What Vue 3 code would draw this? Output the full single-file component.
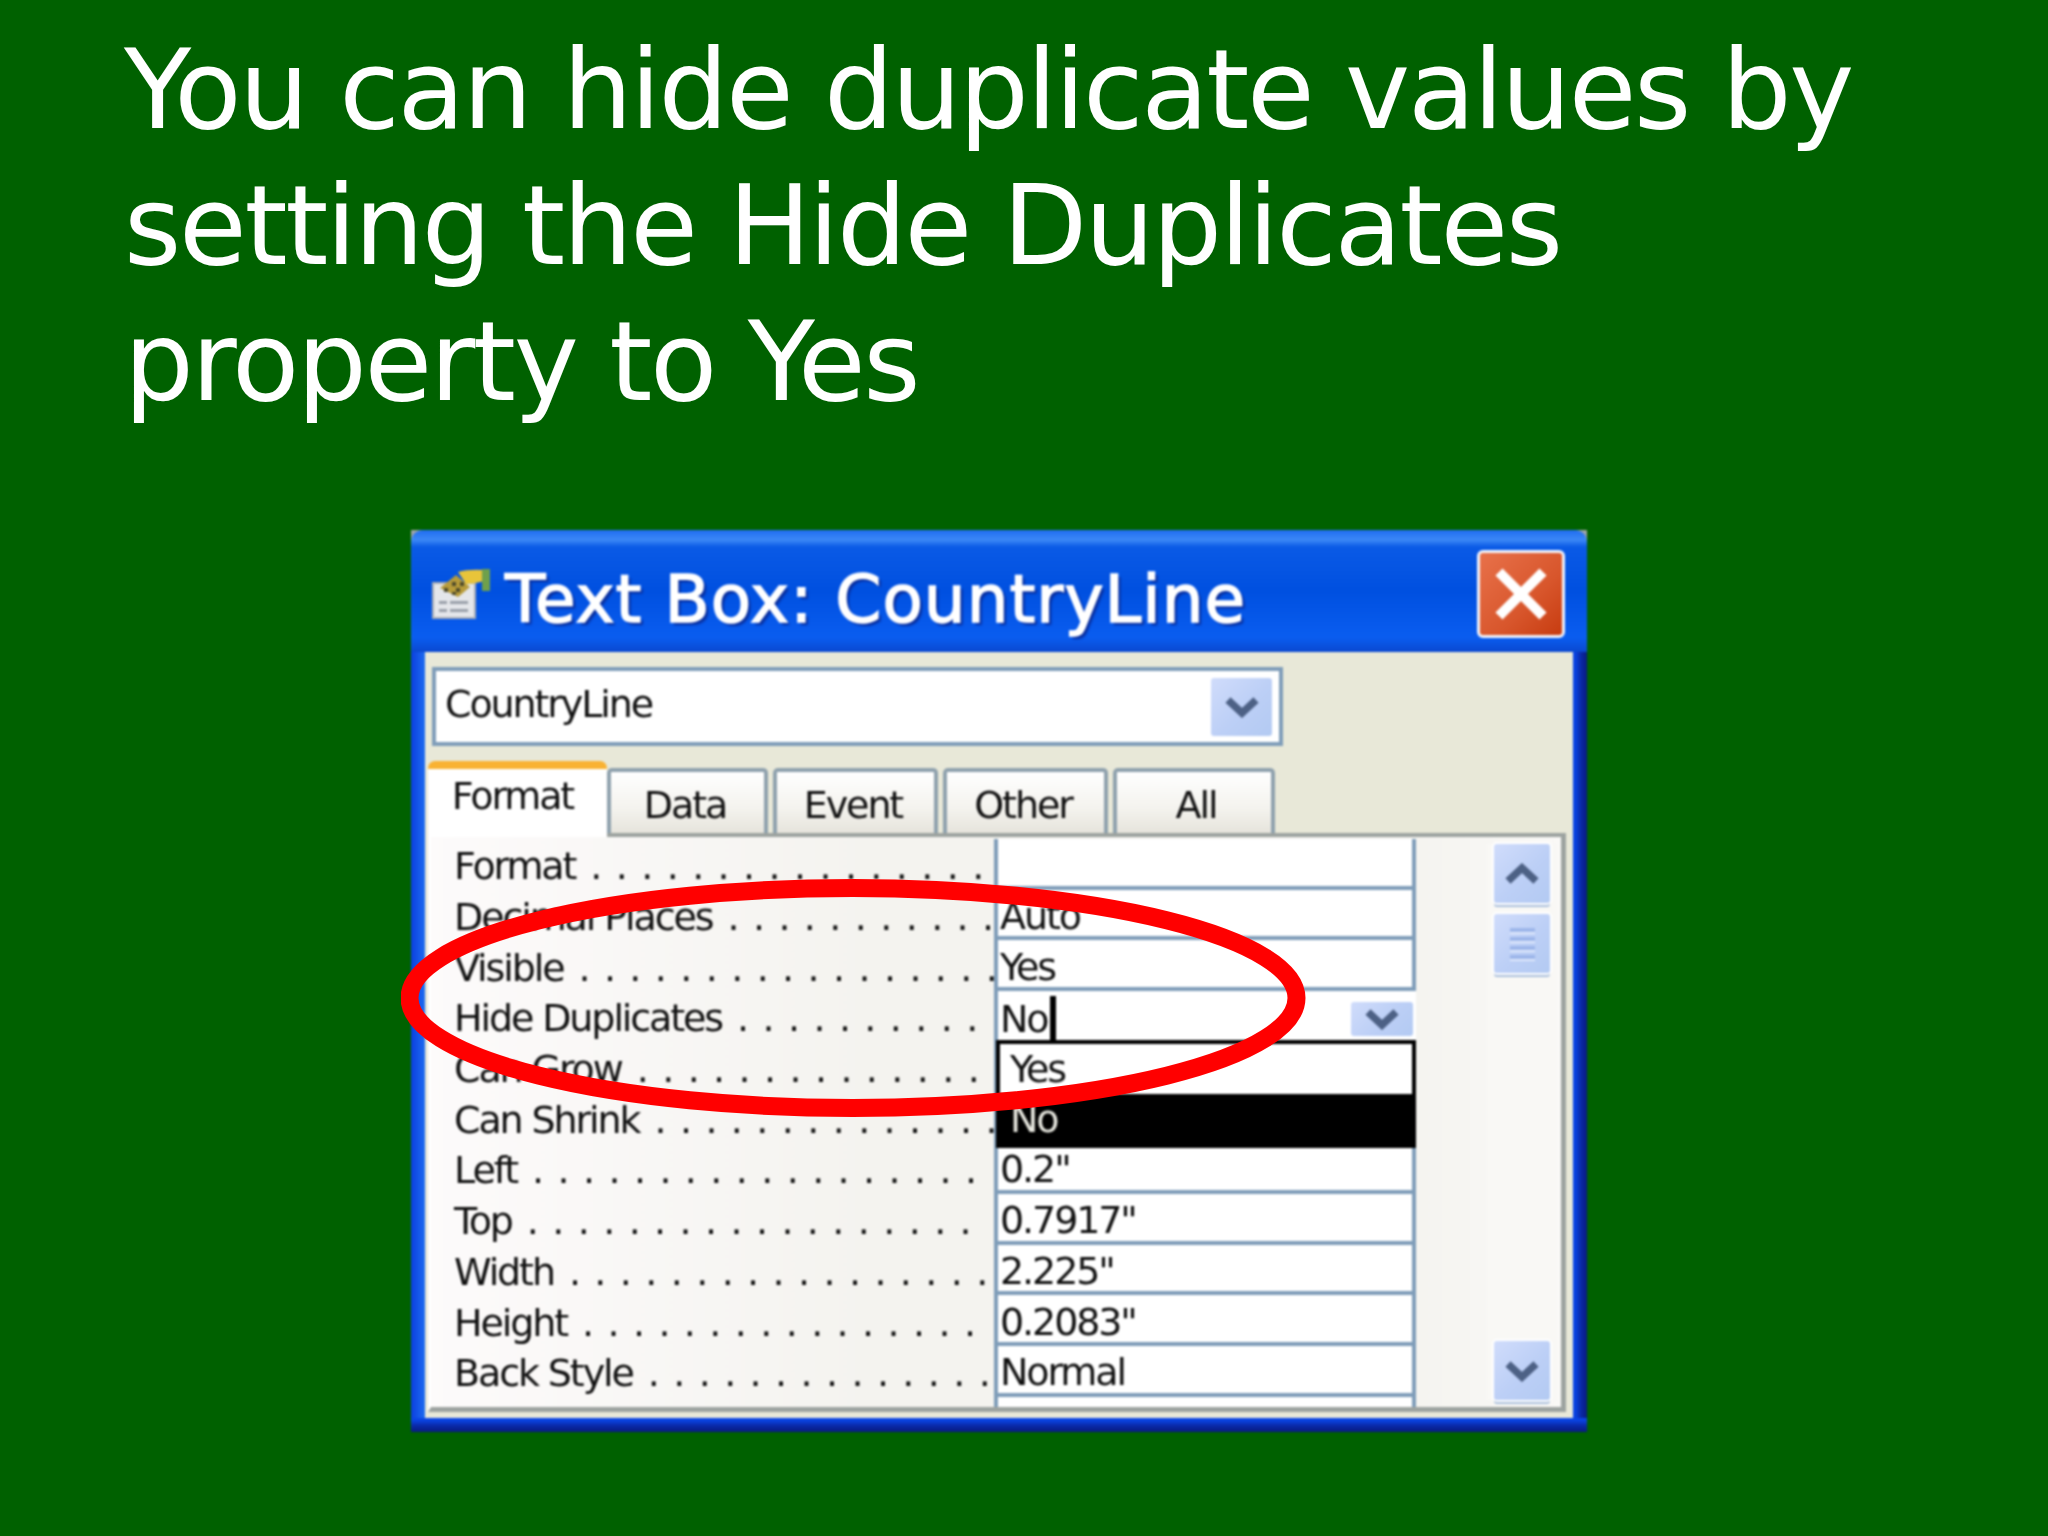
<template>
  <div class="slide">
    <h1 class="heading">
      You can hide duplicate values by<br />
      setting the Hide Duplicates<br />
      property to Yes
    </h1>

    <div class="dialog-wrap">
      <div class="dialog">
        <div class="titlebar">
          <svg class="title-icon" width="58" height="50" viewBox="0 0 58 50">
            <rect x="1" y="14" width="42" height="35" fill="#e4e6ea" stroke="#a9adb5" stroke-width="2" />
            <rect x="7" y="32" width="8" height="3" fill="#9aa0aa" />
            <rect x="18" y="32" width="18" height="3" fill="#9aa0aa" />
            <rect x="7" y="40" width="8" height="3" fill="#9aa0aa" />
            <rect x="18" y="40" width="18" height="3" fill="#9aa0aa" />
            <path d="M8 19 L24 6 L38 18 L26 28 Z" fill="#b79b3a" />
            <path d="M12 19 h4 v4 h-4z M20 13 h4 v4 h-4z M24 19 h4 v4 h-4z M28 13 h4 v4 h-4z M20 23 h4 v3 h-4z" fill="#4e4a2a" />
            <path d="M26 3 Q36 0 52 1 L52 12 Q42 15 34 15 Z" fill="#e8c43a" />
            <rect x="50" y="0" width="8" height="22" fill="#6fa04c" />
          </svg>
          <span class="title-text">Text Box: CountryLine</span>
          <div class="close-btn">
            <svg width="54" height="54" viewBox="0 0 54 54">
              <path d="M5 5 L49 49 M49 5 L5 49" stroke="#fff" stroke-width="10" />
            </svg>
          </div>
        </div>

        <div class="frame">
          <div class="dialog-body">
            <div class="combo">
              <span class="combo-text">CountryLine</span>
              <div class="arrow-btn combo-btn">
                <svg class="chevron" viewBox="0 0 34 22"><path d="M3 4 L17 17 L31 4" /></svg>
              </div>
            </div>

            <div class="tabs">
              <div
                v-for="tab in tabs"
                :key="tab.name"
                class="tab"
                :class="{ active: tab.active }"
                :style="{ width: tab.width + 'px' }"
              >
                {{ tab.name }}
              </div>
            </div>

            <div class="panel">
              <div class="rows">
                <div v-for="row in rows" :key="row.label" class="row">
                  <div class="prop-name">
                    <span class="prop-label">{{ row.label }}</span>
                    <span class="prop-dots">{{ leader(row.dots) }}</span>
                  </div>
                  <div class="prop-value" :class="{ editing: row.editing }">
                    <span>{{ row.value }}</span>
                    <template v-if="row.editing">
                      <i class="caret"></i>
                      <div class="arrow-btn value-btn">
                        <svg class="chevron" viewBox="0 0 34 22"><path d="M3 4 L17 17 L31 4" /></svg>
                      </div>
                      <div class="dropdown">
                        <div class="option">Yes</div>
                        <div class="option selected">No</div>
                      </div>
                    </template>
                  </div>
                </div>
              </div>

              <div class="scrollbar">
                <div class="arrow-btn scroll-btn">
                  <svg class="chevron up" viewBox="0 0 34 22"><path d="M3 4 L17 17 L31 4" /></svg>
                </div>
                <div class="arrow-btn scroll-btn thumb">
                  <i></i><i></i><i></i><i></i>
                </div>
                <div class="arrow-btn scroll-btn last">
                  <svg class="chevron" viewBox="0 0 34 22"><path d="M3 4 L17 17 L31 4" /></svg>
                </div>
              </div>
            </div>
          </div>
        </div>
      </div>

      <svg class="circle" width="920" height="254" viewBox="0 0 920 254">
        <ellipse cx="452" cy="119" rx="443.5" ry="110" fill="none" stroke="#ff0000" stroke-width="18" />
      </svg>
    </div>
  </div>
</template>

<script setup>
const tabs = [
  { name: 'Format', width: 179, active: true },
  { name: 'Data', width: 161 },
  { name: 'Event', width: 165 },
  { name: 'Other', width: 165 },
  { name: 'All', width: 162 }
]

const rows = [
  { label: 'Format', dots: 16, value: '' },
  { label: 'Decimal Places', dots: 11, value: 'Auto' },
  { label: 'Visible', dots: 17, value: 'Yes' },
  { label: 'Hide Duplicates', dots: 10, value: 'No', editing: true },
  { label: 'Can Grow', dots: 14, value: '' },
  { label: 'Can Shrink', dots: 14, value: '' },
  { label: 'Left', dots: 18, value: '0.2"' },
  { label: 'Top', dots: 18, value: '0.7917"' },
  { label: 'Width', dots: 17, value: '2.225"' },
  { label: 'Height', dots: 16, value: '0.2083"' },
  { label: 'Back Style', dots: 14, value: 'Normal' },
  { label: '', dots: 0, value: '' }
]

const leader = (count) => Array(count).fill('.').join(' ')
</script>

<style>
body {
  background: #006100;
}
</style>

<style scoped>
.slide {
  width: 2048px;
  height: 1536px;
  overflow: hidden;
  background: #006100;
  font-family: 'DejaVu Sans', Verdana, sans-serif;
}

.heading {
  margin: 22px 0 0 124px;
  font-size: 110px;
  font-weight: 400;
  line-height: 136px;
  letter-spacing: -2.3px;
  color: #fff;
  filter: blur(0.5px);
}

.dialog-wrap {
  position: relative;
  width: 1176px;
  margin: 100px 0 0 411px;
}

.dialog {
  height: 902px;
  display: flex;
  flex-direction: column;
  background: #9ea4a8;
  filter: blur(0.8px);
}

.titlebar {
  height: 122px;
  flex-shrink: 0;
  display: flex;
  align-items: center;
  padding: 0 22px 0 21px;
  border-radius: 12px 12px 0 0;
  background: linear-gradient(#1f6cf0 0, #3c88f6 8%, #0a5ae6 14%, #0050e0 50%, #0a5df0 88%, #0a48d0 100%);
}

.title-icon {
  flex-shrink: 0;
  margin: 6px 15px 0 0;
}

.title-text {
  flex: 1;
  margin-top: 17px;
  font-size: 66px;
  letter-spacing: 1px;
  color: #fff;
  -webkit-text-stroke: 1.5px #fff;
  text-shadow: 3px 3px 2px #0a2f9e;
}

.close-btn {
  width: 88px;
  height: 88px;
  margin-top: 6px;
  box-sizing: border-box;
  display: flex;
  align-items: center;
  justify-content: center;
  border: 3px solid #f1f3fb;
  border-radius: 6px;
  background: linear-gradient(135deg, #e8714a, #d8562c 60%, #c73c10);
}

.frame {
  flex: 1;
  min-height: 0;
  display: flex;
  padding: 0 14px 14px 14px;
  background:
    linear-gradient(#0a44e4 15%, #0a2aa8 55%, #081a80) bottom / 100% 14px no-repeat,
    linear-gradient(90deg, #0a44e4 15%, #0a2aa8 55%, #081a80) right / 14px 100% no-repeat,
    linear-gradient(90deg, #0a3ee0, #1e6cf0) left / 14px 100% no-repeat;
}

.dialog-body {
  flex: 1;
  min-width: 0;
  padding: 15px 7px 6px 3px;
  background: #e8e8d8;
}

.combo {
  width: 851px;
  height: 79px;
  margin-left: 4px;
  display: flex;
  align-items: center;
  justify-content: space-between;
  padding: 0 7px 0 9px;
  box-sizing: border-box;
  background: #fff;
  border: 4px solid #7f9db9;
}

.combo-text {
  margin-bottom: 6px;
  font-size: 38px;
  letter-spacing: -2.1px;
  color: #111;
}

.arrow-btn {
  display: flex;
  align-items: center;
  justify-content: center;
  flex-shrink: 0;
  box-sizing: border-box;
  border-radius: 3px;
  background: linear-gradient(135deg, #d0dcfb, #bccff6 55%, #b3caf2);
}

.combo-btn {
  width: 61px;
  height: 58px;
}

.chevron {
  width: 34px;
  height: 22px;
  fill: none;
  stroke: #4d6185;
  stroke-width: 7.5;
}

.chevron.up {
  transform: scaleY(-1);
}

.tabs {
  display: flex;
  align-items: flex-end;
  gap: 5px;
  height: 72px;
  margin-top: 15px;
  position: relative;
  z-index: 1;
}

.tab {
  height: 65px;
  box-sizing: border-box;
  display: flex;
  align-items: center;
  justify-content: center;
  padding: 4px 5px 0 0;
  font-size: 38px;
  letter-spacing: -2.1px;
  color: #111;
  background: linear-gradient(#fff, #f4f3ee 60%, #e6e4dc);
  border: 4px solid #8fa1ad;
  border-bottom: 0;
  border-radius: 5px 5px 0 0;
}

.tab:last-child {
  padding: 4px 0 0 4px;
}

.tab.active {
  height: 76px;
  margin: 0 -5px -4px 0;
  padding: 0 10px 14px 0;
  background: #fff;
  border: 0;
  border-top: 8px solid #f9b233;
  border-radius: 7px 7px 0 0;
}

.panel {
  height: 579px;
  box-sizing: border-box;
  display: flex;
  padding: 2px 0 0 0;
  overflow: hidden;
  background: linear-gradient(90deg, #fdfbfb, #f4f3ef 40%, #f4f3ef 85%, #faf9f7);
  border-left: 3px solid #fff;
  border-top: 4px solid #9da3a0;
  border-right: 5px solid #9da3a0;
  border-bottom: 5px solid #9da3a0;
}

.rows {
  width: 985px;
  flex-shrink: 0;
}

.row {
  height: 50.7px;
  display: flex;
  font-size: 38px;
  letter-spacing: -2.1px;
  color: #111;
}

.prop-name {
  width: 563px;
  box-sizing: border-box;
  display: flex;
  align-items: center;
  padding: 4px 0 0 23px;
  white-space: nowrap;
}

.prop-dots {
  margin-left: 15px;
  letter-spacing: 0;
  word-spacing: 1.3px;
}

.prop-value {
  position: relative;
  flex: 1;
  box-sizing: border-box;
  display: flex;
  align-items: center;
  padding: 6px 0 0 2px;
  background: #fff;
  border: solid #7f9db9;
  border-width: 0 4px 4px 4px;
}

.prop-value.editing {
  border-right: 0;
  border-bottom: 0;
}

.caret {
  width: 6px;
  height: 47px;
  margin-left: 3px;
  background: #000;
}

.value-btn {
  width: 62px;
  height: 34px;
  margin-left: auto;
  margin-right: 3px;
}

.dropdown {
  position: absolute;
  top: 49px;
  left: -2px;
  width: 420px;
  box-sizing: border-box;
  border: 4px solid #000;
  background: #fff;
  z-index: 2;
}

.option {
  height: 50px;
  display: flex;
  align-items: center;
  padding-left: 10px;
}

.option.selected {
  background: #000;
  color: #e8e8e0;
}

.scrollbar {
  width: 70px;
  height: 556px;
  margin: 5px 0 0 71px;
  display: flex;
  flex-direction: column;
  align-items: center;
  gap: 11px;
  background: #f9f8f5;
}

.scroll-btn {
  width: 56px;
  height: 59px;
  box-shadow: 0 0 0 2px #fff, 0 4px 0 0 #a9bedb;
}

.scroll-btn.last {
  margin-top: auto;
}

.thumb {
  flex-direction: column;
  gap: 5px;
}

.thumb i {
  display: block;
  width: 25px;
  height: 4px;
  background: #9db6ea;
  box-shadow: 0 2px 0 #dfe8fb;
}

.circle {
  position: absolute;
  top: 349px;
  left: -10px;
}
</style>
